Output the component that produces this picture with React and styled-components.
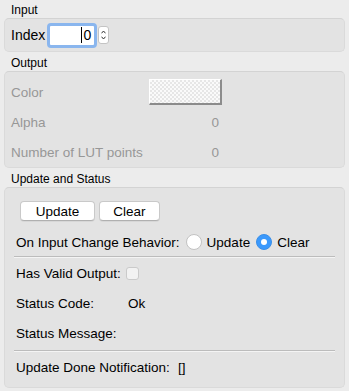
import React, { useState } from "react";
import styled, { createGlobalStyle } from "styled-components";

const GlobalStyle = createGlobalStyle`
	html, body {
		margin: 0;
		padding: 0;
		background: #ececec;
	}
	body {
		font-family: "Liberation Sans", Arial, sans-serif;
		color: #000;
	}
`;

const Window = styled.div`
	width: 349px;
	height: 391px;
	box-sizing: border-box;
	padding: 2px 4px 3px 4px;
	display: flex;
	flex-direction: column;
`;

const SectionTitle = styled.div`
	height: 16px;
	line-height: 16px;
	font-size: 12px;
	padding-left: 7px;
	margin-top: ${(props) => (props.$first ? "0" : "3px")};
`;

const GroupBox = styled.div`
	box-sizing: border-box;
	background: #e3e3e3;
	border: 1px solid #dadada;
	border-top-color: #d3d3d3;
	border-radius: 5px;
	height: ${(props) => props.$height}px;
	display: flex;
	flex-direction: column;
`;

const InputRow = styled.div`
	flex: 1;
	display: flex;
	align-items: center;
	padding-left: 6px;
	font-size: 14px;
`;

const FieldLabel = styled.span`
	margin-right: 2px;
`;

const SpinField = styled.div`
	box-sizing: border-box;
	width: 50px;
	height: 25px;
	border: 3px solid #8ab6ee;
	border-radius: 4px;
	background: #fff;
	display: flex;
	align-items: center;
	justify-content: flex-end;
	padding-right: 3px;
	font-size: 14px;
`;

const Caret = styled.span`
	display: inline-block;
	width: 1px;
	height: 16px;
	background: #000;
	margin-right: 1px;
`;

const Stepper = styled.div`
	box-sizing: border-box;
	width: 11px;
	height: 18px;
	margin-left: 1px;
	background: #fff;
	border: 1px solid #c4c4c4;
	border-radius: 3px;
	display: flex;
	flex-direction: column;
	align-items: center;
	justify-content: center;
	gap: 2px;
`;

const OutputGrid = styled.div`
	padding: 5px 0 0 6px;
	display: grid;
	grid-template-columns: 138px 73px;
	grid-auto-rows: 30px;
	align-items: center;
	font-size: 13.5px;
	color: #979797;
`;

const Value = styled.span`
	text-align: right;
	padding-right: 3px;
`;

const Swatch = styled.div`
	box-sizing: border-box;
	width: 73px;
	height: 26px;
	border-top: 1px solid #fff;
	border-left: 1px solid #fff;
	border-right: 2px solid #8c8c8c;
	border-bottom: 2px solid #8c8c8c;
	background-color: #f7f7f7;
	background-image: repeating-conic-gradient(#e6e6e6 0% 25%, #fafafa 0% 50%);
	background-size: 4px 4px;
`;

const UpdateBody = styled.div`
	padding: 13px 9px 0 9px;
	display: flex;
	flex-direction: column;
	font-size: 13.5px;
`;

const ButtonRow = styled.div`
	display: flex;
	gap: 4px;
	padding-left: 6px;
`;

const PushButton = styled.button`
	box-sizing: border-box;
	height: 20px;
	width: ${(props) => props.$width}px;
	background: #fff;
	border: 1px solid #c9c9c9;
	border-bottom-color: #b0b0b0;
	border-radius: 4px;
	font-family: inherit;
	font-size: 13.5px;
	color: #000;
	padding: 0;
	box-shadow: 0 1px 0 rgba(0, 0, 0, 0.05);
`;

const RadioRow = styled.div`
	margin-top: 10px;
	height: 22px;
	display: flex;
	align-items: center;
	padding-left: 2px;
`;

const RadioOption = styled.label`
	display: flex;
	align-items: center;
	margin-left: ${(props) => props.$gap}px;
	cursor: pointer;
`;

const RadioCircle = styled.span`
	box-sizing: border-box;
	width: 16px;
	height: 16px;
	border-radius: 50%;
	margin-right: 5px;
	display: flex;
	align-items: center;
	justify-content: center;
	background: ${(props) => (props.$checked ? "#3b99fc" : "#fff")};
	border: 1px solid ${(props) => (props.$checked ? "#3a8fe8" : "#c2c2c2")};

	&::after {
		content: "";
		display: ${(props) => (props.$checked ? "block" : "none")};
		width: 6px;
		height: 6px;
		border-radius: 50%;
		background: #fff;
	}
`;

const Separator = styled.div`
	margin-top: ${(props) => props.$top}px;
	height: 1px;
	background: #bcbcbc;
	border-bottom: 1px solid #f4f4f4;
`;

const StatusRow = styled.div`
	height: 30px;
	display: flex;
	align-items: center;
	padding-left: 2px;
`;

const StatusLabel = styled.span`
	width: ${(props) => props.$width}px;
`;

const CheckBox = styled.span`
	box-sizing: border-box;
	width: 13px;
	height: 13px;
	border: 1px solid #cacaca;
	border-radius: 3px;
	background: #f2f2f2;
`;

const Chevron = ({ up }) => (
	<svg width="5" height="4" viewBox="0 0 5 4">
		<path
			d={up ? "M0.5 3.3 L2.5 1 L4.5 3.3" : "M0.5 0.7 L2.5 3 L4.5 0.7"}
			fill="none"
			stroke="#333"
			strokeWidth="1"
		/>
	</svg>
);

const App = () => {
	const [behavior, setBehavior] = useState("clear");

	return (
		<Window>
			<GlobalStyle />
			<SectionTitle $first>Input</SectionTitle>
			<GroupBox $height={34}>
				<InputRow>
					<FieldLabel>Index</FieldLabel>
					<SpinField>
						<Caret />0
					</SpinField>
					<Stepper>
						<Chevron up />
						<Chevron />
					</Stepper>
				</InputRow>
			</GroupBox>

			<SectionTitle>Output</SectionTitle>
			<GroupBox $height={97}>
				<OutputGrid>
					<span>Color</span>
					<Swatch />
					<span>Alpha</span>
					<Value>0</Value>
					<span>Number of LUT points</span>
					<Value>0</Value>
				</OutputGrid>
			</GroupBox>

			<SectionTitle>Update and Status</SectionTitle>
			<GroupBox $height={201}>
				<UpdateBody>
					<ButtonRow>
						<PushButton $width={75}>Update</PushButton>
						<PushButton $width={61}>Clear</PushButton>
					</ButtonRow>
					<RadioRow>
						<span>On Input Change Behavior:</span>
						<RadioOption $gap={6} onClick={() => setBehavior("update")}>
							<RadioCircle $checked={behavior === "update"} />
							Update
						</RadioOption>
						<RadioOption $gap={6} onClick={() => setBehavior("clear")}>
							<RadioCircle $checked={behavior === "clear"} />
							Clear
						</RadioOption>
					</RadioRow>
					<Separator $top={3} />
					<StatusRow>
						<StatusLabel $width={110}>Has Valid Output:</StatusLabel>
						<CheckBox />
					</StatusRow>
					<StatusRow>
						<StatusLabel $width={112}>Status Code:</StatusLabel>
						<span>Ok</span>
					</StatusRow>
					<StatusRow>
						<StatusLabel $width={112}>Status Message:</StatusLabel>
					</StatusRow>
					<Separator $top={2} />
					<StatusRow>
						<StatusLabel $width={162}>Update Done Notification:</StatusLabel>
						<span>[]</span>
					</StatusRow>
				</UpdateBody>
			</GroupBox>
		</Window>
	);
};

export default App;
